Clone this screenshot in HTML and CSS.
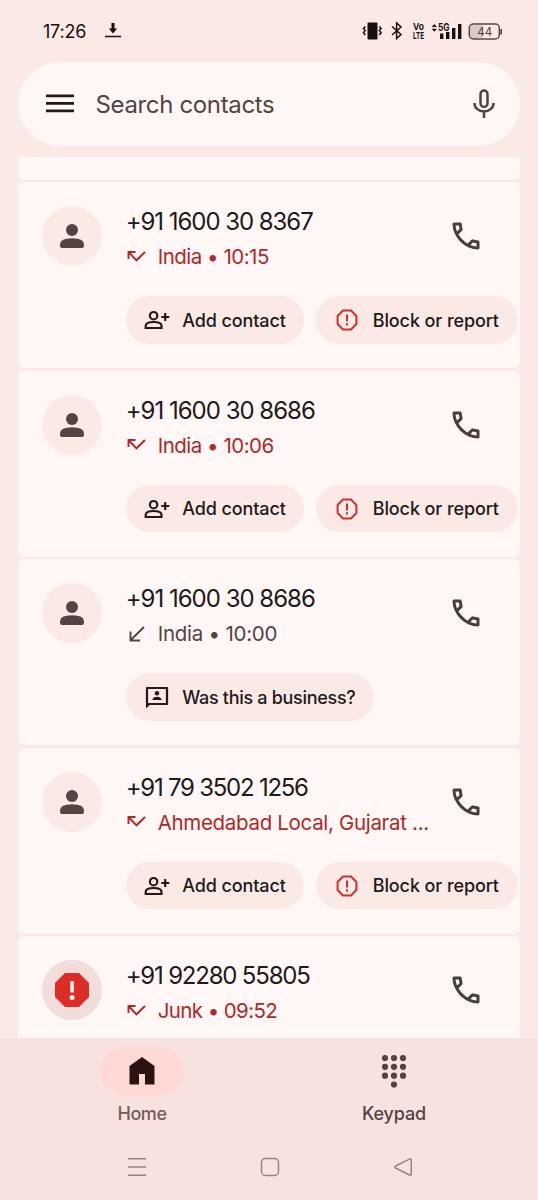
FILE: index.html
```html
<!DOCTYPE html>
<html lang="en">
<head>
<meta charset="utf-8">
<title>Phone</title>
<link rel="stylesheet" href="styles.css">
</head>
<body>
<svg class="defs" width="0" height="0">
  <symbol id="person" viewBox="0 0 24 24"><circle cx="12" cy="6" r="6"/><path d="M0 24v-3.600Q0 14.200 12 14.200T24 20.400V22Q24 24 22 24H2Q0 24 0 22z"/></symbol>
  <symbol id="call" viewBox="0 0 24 24"><path d="M19.950 21q-3.125 0-6.175-1.363t-5.550-3.862q-2.500-2.500-3.862-5.550T3 4.050q0-.450.300-.750t.750-.300H8.100q.350 0 .625.238t.325.562l.650 3.500q.050.400-.025.675T9.400 8.450L6.975 10.900q.500.925 1.187 1.787t1.513 1.663q.775.775 1.625 1.438T13.100 17l2.350-2.350q.225-.225.588-.338t.712-.062l3.450.700q.350.100.575.363T21 15.900v4.050q0 .450-.300.750t-.750.300ZM6.025 9l1.650-1.650L7.250 5H5.025q.125 1.025.350 2.025T6.025 9Zm8.950 8.950q.975.425 1.988.675T19 18.950v-2.200l-2.350-.475-1.675 1.675Z"/></symbol>
  <symbol id="missed" viewBox="0 0 20 14"><path d="M2.500 9V2h7M3 2.500l7.500 7.800 8.500-8.300" fill="none" stroke="currentColor" stroke-width="1.900"/></symbol>
  <symbol id="incoming" viewBox="0 0 20 16"><path d="M18 1L4.500 14.200M4.500 5.500v9H14" fill="none" stroke="currentColor" stroke-width="1.900"/></symbol>
  <symbol id="add" viewBox="0 0 26 20"><g fill="none" stroke="currentColor" stroke-width="2.200"><circle cx="9.600" cy="5.700" r="3.700"/><path d="M1.700 18v-2.300Q1.700 12 9.600 12t7.900 3.700V18zM21.200 3v8M17.300 7h8"/></g></symbol>
  <symbol id="report" viewBox="0 0 22 22"><path d="M7 1.600h8L20.400 7v8L15 20.400H7L1.600 15V7z" fill="none" stroke="currentColor" stroke-width="2"/><path d="M10 5.500h2v7h-2zM10 14.300h2v2.200h-2z"/></symbol>
  <symbol id="business" viewBox="0 0 24 23"><path d="M2 20V2h20v16H4z" fill="none" stroke="currentColor" stroke-width="2.200" stroke-linejoin="round"/><path d="M1 17h5L1 22.500z"/><circle cx="12" cy="7.300" r="2.200"/><path d="M7.500 14v-1q1-2.300 4.500-2.300t4.500 2.300v1z"/></symbol>
</svg>
<div class="screen">
  <header class="status">
    <span class="time">17:26</span>
    <svg class="download" width="16" height="16" viewBox="0 0 16 16"><path d="M6.500 0h3v5.500h2.700L8 10.500 3.800 5.500h2.700zM0 12.800h16v1.500H0z"/></svg>
    <svg class="indicators" width="142" height="20" viewBox="0 0 142 20">
      <rect x="5.500" y="1.500" width="10" height="17" rx="1"/>
      <path d="M3.300 5.500L1.500 7.500l1.800 2-1.800 2 1.800 2.500M17.300 5.500l1.800 2-1.800 2 1.800 2-1.800 2.500" fill="none" stroke="#171010" stroke-width="1.500"/>
      <path d="M30 5.500l9 8-4.400 4V2l4.400 4-9 8" fill="none" stroke="#171010" stroke-width="1.500"/>
      <text class="tiny" x="51" y="9" textLength="11" lengthAdjust="spacingAndGlyphs">Vo</text>
      <text class="tiny" x="51" y="17.800" textLength="11" lengthAdjust="spacingAndGlyphs">LTE</text>
      <path d="M69.700 6l2.600-3 2.600 3zM69.700 7.700h5.200l-2.600 3z"/>
      <text class="tiny net" x="76" y="9.800" textLength="11.500" lengthAdjust="spacingAndGlyphs">5G</text>
      <path d="M78 12.500h3.400V18H78zM84 11h3.400v7H84zM90 7h3.400v11H90zM96 3h3.400v15H96z"/>
      <rect x="108" y="4" width="13" height="13.500" rx="3" fill="#dccac7"/>
      <rect x="107.300" y="3" width="30" height="15" rx="4" fill="none" stroke="#5a4645" stroke-width="1.500"/>
      <path d="M138.300 8h1.700v5.500h-1.700z" fill="#5a4645"/>
      <text class="battery" x="115.300" y="15">44</text>
    </svg>
  </header>

  <div class="search">
    <svg width="28" height="20" viewBox="0 0 28 20"><path d="M0 .500h28v2.700H0zM0 8h28v2.700H0zM0 15.500h28v2.700H0z"/></svg>
    <span class="search-label">Search contacts</span>
    <svg class="mic" width="22" height="30" viewBox="0 0 22 30"><rect x="7.500" y="1.500" width="7" height="16.500" rx="3.500"/><path d="M1.500 14v.500a9.500 8 0 0 0 19 0V14M11 22.500V29"/></svg>
  </div>

  <main class="calls">
    <div class="card stub"></div>

    <article class="card">
      <div class="row">
        <div class="avatar"><svg width="24" height="24"><use href="#person"/></svg></div>
        <div class="info"><div class="number n1">+91 1600 30 8367</div><div class="detail missed"><svg width="20" height="14"><use href="#missed"/></svg><span>India • 10:15</span></div></div>
        <svg class="call" width="36" height="36"><use href="#call"/></svg>
      </div>
      <div class="chips"><div class="chip add"><svg width="26" height="20"><use href="#add"/></svg><span>Add contact</span></div><div class="chip block"><svg width="22" height="22"><use href="#report"/></svg><span>Block or report</span></div></div>
    </article>

    <article class="card">
      <div class="row">
        <div class="avatar"><svg width="24" height="24"><use href="#person"/></svg></div>
        <div class="info"><div class="number n2">+91 1600 30 8686</div><div class="detail missed"><svg width="20" height="14"><use href="#missed"/></svg><span>India • 10:06</span></div></div>
        <svg class="call" width="36" height="36"><use href="#call"/></svg>
      </div>
      <div class="chips"><div class="chip add"><svg width="26" height="20"><use href="#add"/></svg><span>Add contact</span></div><div class="chip block"><svg width="22" height="22"><use href="#report"/></svg><span>Block or report</span></div></div>
    </article>

    <article class="card">
      <div class="row">
        <div class="avatar"><svg width="24" height="24"><use href="#person"/></svg></div>
        <div class="info"><div class="number n2">+91 1600 30 8686</div><div class="detail answered"><svg width="20" height="16"><use href="#incoming"/></svg><span>India • 10:00</span></div></div>
        <svg class="call" width="36" height="36"><use href="#call"/></svg>
      </div>
      <div class="chips"><div class="chip business"><svg width="24" height="23"><use href="#business"/></svg><span>Was this a business?</span></div></div>
    </article>

    <article class="card">
      <div class="row">
        <div class="avatar"><svg width="24" height="24"><use href="#person"/></svg></div>
        <div class="info"><div class="number n4">+91 79 3502 1256</div><div class="detail missed place"><svg width="20" height="14"><use href="#missed"/></svg><span>Ahmedabad Local, Gujarat ...</span></div></div>
        <svg class="call" width="36" height="36"><use href="#call"/></svg>
      </div>
      <div class="chips"><div class="chip add"><svg width="26" height="20"><use href="#add"/></svg><span>Add contact</span></div><div class="chip block"><svg width="22" height="22"><use href="#report"/></svg><span>Block or report</span></div></div>
    </article>

    <article class="card">
      <div class="row">
        <div class="avatar spam"><svg width="34" height="34" viewBox="0 0 34 34"><path d="M10 0h14l10 10v14L24 34H10L0 24V10z" fill="#db2c25"/><path d="M15.300 8h3.600v11.500h-3.600z" fill="#fff0ed"/><circle cx="17.100" cy="24.500" r="2.500" fill="#fff0ed"/></svg></div>
        <div class="info"><div class="number n5">+91 92280 55805</div><div class="detail missed junk"><svg width="20" height="14"><use href="#missed"/></svg><span>Junk • 09:52</span></div></div>
        <svg class="call" width="36" height="36"><use href="#call"/></svg>
      </div>
    </article>
  </main>

  <footer class="bottom">
    <nav class="tabs">
      <div class="tab"><div class="pill active"><svg width="26" height="28" viewBox="0 0 26 28"><path d="M13 0l12.500 9v18.500h-9.500V17h-6v10.500H.500V9z" fill="#2b1312"/></svg></div><span class="home-label">Home</span></div>
      <div class="tab"><div class="pill"><svg width="26" height="34" viewBox="0 0 26 34" fill="#51403f"><circle cx="4" cy="4" r="3.100"/><circle cx="13" cy="4" r="3.100"/><circle cx="22" cy="4" r="3.100"/><circle cx="4" cy="12.800" r="3.100"/><circle cx="13" cy="12.800" r="3.100"/><circle cx="22" cy="12.800" r="3.100"/><circle cx="4" cy="21.700" r="3.100"/><circle cx="13" cy="21.700" r="3.100"/><circle cx="22" cy="21.700" r="3.100"/><circle cx="13" cy="30.500" r="3.100"/></svg></div><span class="keypad-label">Keypad</span></div>
    </nav>
    <div class="system">
      <svg width="20" height="20" viewBox="0 0 20 20"><path d="M1 1.700h18M1 10h18M1 18.300h18"/></svg>
      <svg width="20" height="20" viewBox="0 0 20 20"><rect x="1.500" y="1.500" width="17" height="17" rx="4"/></svg>
      <svg width="20" height="20" viewBox="0 0 20 20"><path d="M17 1.800L2.500 9Q1 10 2.500 11L17 18.200Q18.200 18.500 18.200 17V3Q18.200 1.500 17 1.800z"/></svg>
    </div>
  </footer>
</div>
</body>
</html>
```
FILE: styles.css
```css
* { box-sizing: border-box; }
body { margin: 0; font-family: Inter, Roboto, sans-serif; background: #fbe9e6; color: #231919; }
svg { display: block; flex: none; fill: currentColor; }
span, .number { white-space: nowrap; }
.defs { position: absolute; }
.screen { width: 538px; height: 1200px; overflow: hidden; display: flex; flex-direction: column; }

.status { height: 62px; flex: none; display: flex; align-items: center; padding: 0 34px 0 43px; color: #171010; }
.time { font-size: 18px; font-weight: 400; letter-spacing: -0.2px; width: 62px; }
.indicators { margin-left: auto; }
.tiny { font-size: 9.500px; font-weight: 700; }
.net { font-size: 10.500px; }
.battery { font-size: 11.500px; font-weight: 400; fill: #4a3938; }

.search { height: 84px; flex: none; margin: 0 18px; padding: 0 25px 0 28px; border-radius: 42px; background: #fff7f5; display: flex; align-items: center; }
.search-label { margin-left: 21.500px; font-size: 24px; font-weight: 400; color: #544342; letter-spacing: -0.35px; }
.mic { margin-left: auto; fill: none; stroke: #51403f; stroke-width: 2.500; }

.calls { margin: 11px 18px 0; height: 881px; flex: none; overflow: hidden; display: flex; flex-direction: column; gap: 2.500px; }
.card { height: 186px; flex: none; border-radius: 6px; background: #fff7f5; padding: 24.300px 0 0 23.700px; }
.stub { height: 22.500px; padding: 0; border-radius: 0 0 6px 6px; }
.row { display: flex; height: 90px; }
.avatar { width: 60px; height: 60px; border-radius: 50%; background: #fbe9e6; color: #544342; display: flex; align-items: center; justify-content: center; }
.spam { background: #f1dedc; }
.info { width: 308px; margin-left: 24px; }
.number { font-size: 24px; font-weight: 400; line-height: 32px; color: #231919; }
.n1 { letter-spacing: -1.050px; }
.n2 { letter-spacing: -1px; }
.n4 { letter-spacing: -1.250px; }
.n5 { letter-spacing: -1.200px; }
.detail { display: flex; align-items: center; height: 37px; gap: 12px; font-size: 20.500px; font-weight: 400; color: #544342; letter-spacing: -0.5px; }
.missed { color: #ae2929; }
.answered { letter-spacing: -0.250px; }
.place { letter-spacing: -0.320px; }
.junk { letter-spacing: -0.600px; }
.call { margin: 12px 0 0 14px; color: #4b3d3c; }
.chips { display: flex; gap: 12.500px; margin-left: 84px; }
.chip { height: 47.500px; border-radius: 24px; background: #fbe9e6; display: flex; align-items: center; font-size: 18px; font-weight: 500; color: #231919; letter-spacing: -0.1px; }
.chip.add { width: 178px; padding-left: 18px; gap: 12.500px; }
.chip.block { width: 201.500px; padding-left: 20px; gap: 14.500px; }
.chip.business { width: 248px; padding-left: 19px; gap: 13.500px; letter-spacing: -0.3px; }
.block svg { color: #cf302e; }

.bottom { flex: 1; background: #f6e3e0; }
.tabs { display: flex; padding: 8.500px 18px 0 16px; }
.tab { flex: 1; display: flex; flex-direction: column; align-items: center; font-size: 18px; font-weight: 500; color: #544342; }
.pill { width: 84px; height: 49px; border-radius: 25px; display: flex; align-items: center; justify-content: center; margin-bottom: 7px; }
.active { background: #ffdad5; }
.home-label { color: #775b59; letter-spacing: -0.4px; }
.keypad-label { letter-spacing: -0.15px; }
.system { display: flex; justify-content: space-between; padding: 33.500px 125px 0 127px; }
.system svg { fill: none; stroke: #998483; stroke-width: 1.500; }
```
